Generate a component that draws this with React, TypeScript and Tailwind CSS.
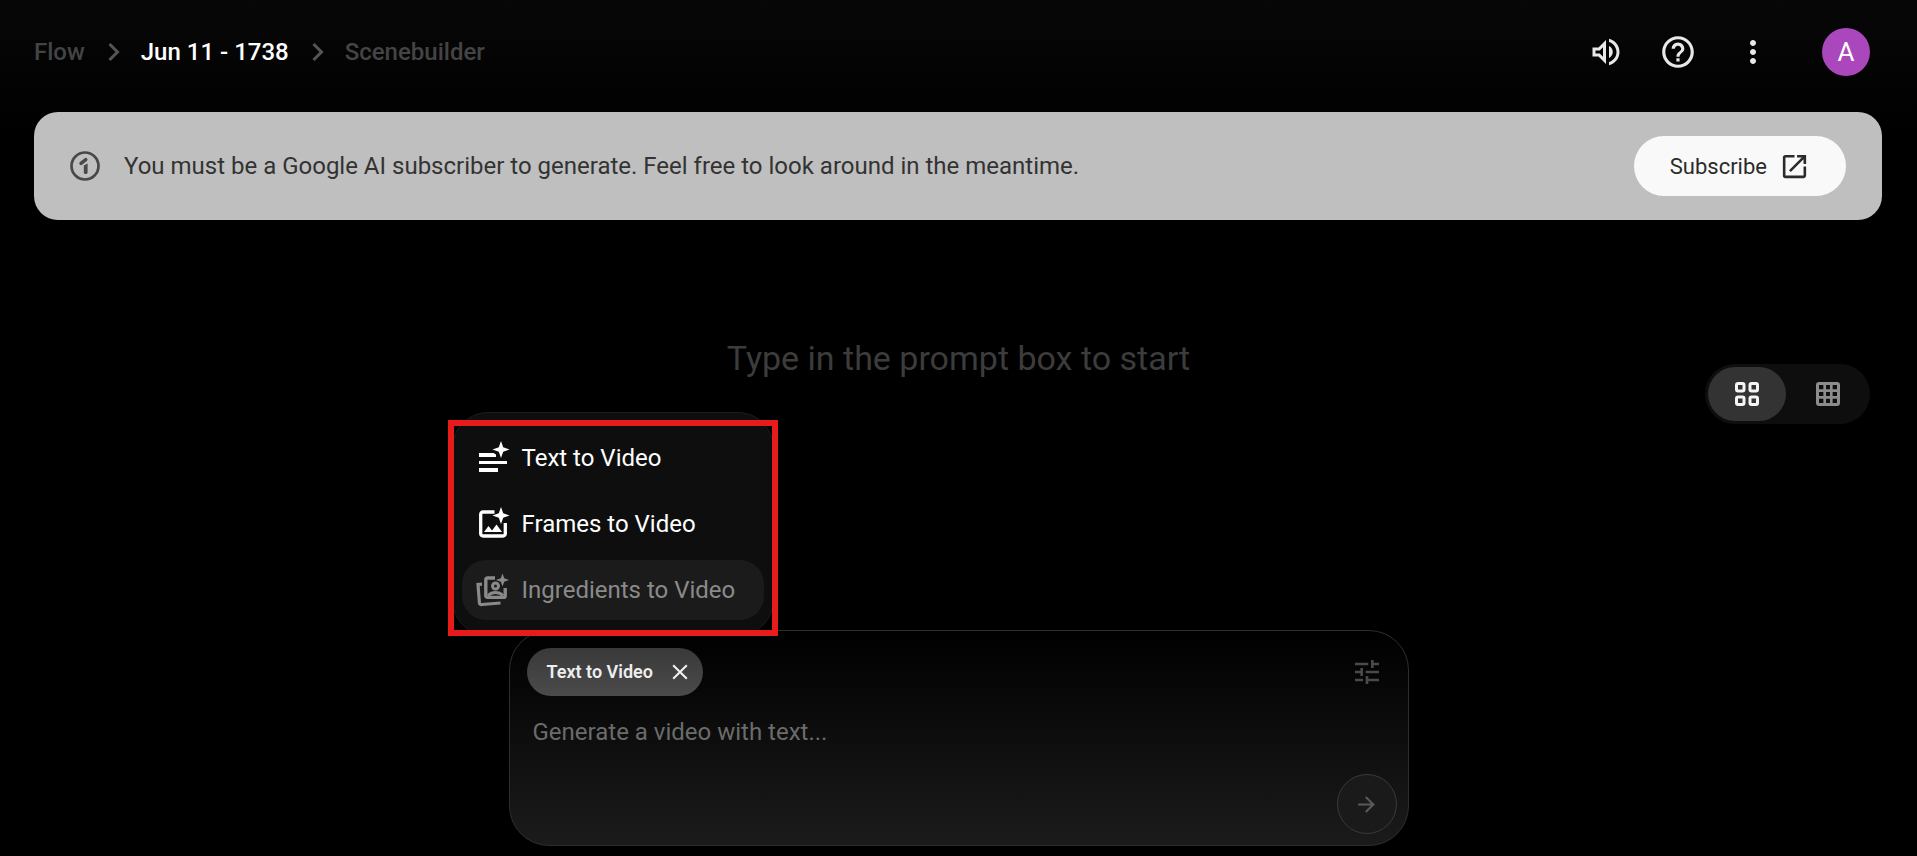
import type { ReactNode, SVGProps } from 'react';
import { useState } from 'react';
import {
  MdArrowForward,
  MdClose,
  MdHelpOutline,
  MdMoreVert,
  MdOpenInNew,
  MdOutlineVolumeUp,
  MdTune,
} from 'react-icons/md';

type IconProps = SVGProps<SVGSVGElement>;

function Icon({ children, ...props }: IconProps & { children: ReactNode }) {
  return (
    <svg viewBox="0 0 32 32" width={32} height={32} fill="currentColor" overflow="visible" aria-hidden="true" {...props}>
      {children}
    </svg>
  );
}

const SPARKLE = 'M23 -1 25.2 5.3 31.5 7.5 25.2 9.7 23 16 20.8 9.7 14.5 7.5 20.8 5.3Z';

function ChevronIcon() {
  return (
    <Icon className="mx-3 text-[#555]" fill="none" stroke="currentColor" strokeWidth={3}>
      <path d="m12.5 8 8 8-8 8" />
    </Icon>
  );
}

function TextSparkIcon() {
  return (
    <Icon>
      <path d={SPARKLE} />
      <path d="M1 11h14.5l2.5 1.5V15H1zM1 19h28v3H1zM1 26h19v4H1z" />
    </Icon>
  );
}

function ImageSparkIcon() {
  return (
    <Icon>
      <path d={SPARKLE} />
      <path
        d="M16.5 4H5a2.3 2.3 0 0 0-2.3 2.3v19.4A2.3 2.3 0 0 0 5 28h20a2.3 2.3 0 0 0 2.3-2.3V15"
        fill="none"
        stroke="currentColor"
        strokeWidth={3.3}
      />
      <path d="M6 24l4.5-6 3.5 4.5 4.5-6L24 24z" />
    </Icon>
  );
}

function PortraitSparkIcon() {
  return (
    <Icon>
      <path d="M24.5 -0.5 26.2 4.3 31 6 26.2 7.7 24.5 12.5 22.8 7.7 18 6 22.8 4.3Z" />
      <path
        d="M17 4H9.5A1.7 1.7 0 0 0 7.800 5.7v16A1.7 1.7 0 0 0 9.5 23.4h16a1.7 1.7 0 0 0 1.7-1.7V14"
        fill="none"
        stroke="currentColor"
        strokeWidth={3.4}
      />
      <circle cx="17.5" cy="12" r="3" fill="none" stroke="currentColor" strokeWidth={3} />
      <path d="M10 21.500c4-4 11-4 15 0" fill="none" stroke="currentColor" strokeWidth={3} />
      <path
        d="M4 10.2 0 10.5 1.4 28.5A2 2 0 0 0 4 30.5L22.5 29"
        fill="none"
        stroke="currentColor"
        strokeWidth={3.200}
      />
    </Icon>
  );
}

function OneIcon() {
  return (
    <Icon className="shrink-0 text-[#484848]" fill="none" stroke="currentColor">
      <circle cx="16" cy="16" r="13.5" strokeWidth={2.7} />
      <path d="M14.8 15.5 18.6 13.500V22.200a1.900 1.900 0 0 1-3.800 0z" fill="currentColor" stroke="none" />
      <path d="M12 13.4 16.8 9.6" strokeWidth={3.4} strokeLinecap="round" />
    </Icon>
  );
}

function TilesIcon() {
  return (
    <svg viewBox="0 0 24 24" width={24} height={24} fill="none" stroke="currentColor" strokeWidth={3} aria-hidden="true">
      <rect x="1.5" y="1.5" width="7.5" height="7.5" rx="1.5" />
      <rect x="15" y="1.5" width="7.5" height="7.5" rx="1.5" />
      <rect x="1.5" y="15" width="7.5" height="7.5" rx="1.5" />
      <rect x="15" y="15" width="7.5" height="7.5" rx="1.5" />
    </svg>
  );
}

function GridIcon() {
  return (
    <svg viewBox="0 0 24 24" width={24} height={24} fill="none" stroke="currentColor" aria-hidden="true">
      <rect x="1.5" y="1.5" width="21" height="21" rx="1.5" strokeWidth={3} />
      <path d="M8.7 2v20M15.3 2v20M2 8.7h20M2 15.3h20" strokeWidth={2.7} />
    </svg>
  );
}

const MODES = [
  { label: 'Text to Video', icon: TextSparkIcon },
  { label: 'Frames to Video', icon: ImageSparkIcon },
  { label: 'Ingredients to Video', icon: PortraitSparkIcon, disabled: true },
];

function Header() {
  return (
    <header className="flex h-28 items-center justify-between pr-[47px] pb-2 pl-[34px]">
      <nav aria-label="Breadcrumb" className="flex items-center text-2xl font-medium text-[#444]">
        <a href="#flow">Flow</a>
        <ChevronIcon />
        <a href="#project" className="text-white">
          Jun 11 - 1738
        </a>
        <ChevronIcon />
        <span>Scenebuilder</span>
      </nav>
      <div className="flex items-center text-[#e8e8e8]">
        <button type="button" aria-label="Sound" className="mr-[35px]">
          <MdOutlineVolumeUp size={36} />
        </button>
        <button type="button" aria-label="Help" className="mr-[38px]">
          <MdHelpOutline size={38} />
        </button>
        <button type="button" aria-label="More" className="mr-[51px]">
          <MdMoreVert size={36} />
        </button>
        <button
          type="button"
          aria-label="Account"
          className="size-12 rounded-full bg-[#ab47bc] text-[26px] leading-12 text-white"
        >
          A
        </button>
      </div>
    </header>
  );
}

function Banner() {
  return (
    <section className="mr-[35px] ml-[34px] flex items-center rounded-3xl bg-[#bfbfbf] py-6 pr-9 pl-[35px] text-[#333]">
      <OneIcon />
      <p className="ml-[23px] flex-1 text-2xl">
        You must be a Google AI subscriber to generate. Feel free to look around in the meantime.
      </p>
      <a
        href="#subscribe"
        className="flex h-15 items-center gap-3 rounded-full bg-[#f9f9f9] px-9 text-[22px] text-[#2b2b2b]"
      >
        Subscribe
        <MdOpenInNew size={31} />
      </a>
    </section>
  );
}

function ViewToggle() {
  const [view, setView] = useState('tiles');
  const views = [
    { id: 'tiles', label: 'Large tiles', icon: TilesIcon },
    { id: 'grid', label: 'Small grid', icon: GridIcon },
  ];

  return (
    <div className="flex h-15 items-center gap-[3px] rounded-full bg-[#0e0e0e] p-[3px]">
      {views.map(({ id, label, icon: ViewIcon }) => (
        <button
          key={id}
          type="button"
          aria-label={label}
          aria-pressed={view === id}
          onClick={() => setView(id)}
          className={`flex h-full w-[78px] items-center justify-center rounded-full ${
            view === id ? 'bg-[#333] text-[#f5f5f5]' : 'text-[#8c8c8c]'
          }`}
        >
          <ViewIcon />
        </button>
      ))}
    </div>
  );
}

function ModeMenu() {
  return (
    <div className="absolute -top-[219px] -left-[58px] z-10 w-[322px]">
      <div
        role="menu"
        className="flex flex-col gap-1.5 rounded-[36px] border border-[#1e1e1e] bg-[#0e0e0e] px-[9px] py-[15px]"
      >
        {MODES.map(({ label, icon: ModeIcon, disabled }) => (
          <button
            key={label}
            type="button"
            role="menuitem"
            disabled={disabled}
            className={`flex h-15 items-center gap-3 rounded-3xl px-4 text-2xl whitespace-nowrap ${
              disabled ? 'bg-[#1b1b1b] text-[#8a8a8a]' : 'text-white'
            }`}
          >
            <ModeIcon />
            {label}
          </button>
        ))}
      </div>
      <div className="pointer-events-none absolute -inset-x-1 top-2 bottom-0 border-6 border-[#e81b1b]" />
    </div>
  );
}

function PromptBox() {
  return (
    <form
      onSubmit={(e) => e.preventDefault()}
      className="relative mx-auto flex h-[216px] w-full max-w-[900px] gap-4 rounded-[40px] border border-[#2e2e2e] bg-linear-to-b/srgb from-black to-[#1b1b1b] pt-[17px] pr-[11px] pb-[11px] pl-[17px]"
    >
      <ModeMenu />
      <div className="flex flex-1 flex-col items-start gap-4">
        <button
          type="button"
          className="flex h-12 items-center gap-3.5 rounded-full bg-linear-to-b/srgb from-[#393939] to-[#4b4b4b] pr-2.5 pl-5 text-lg font-semibold text-[#eee]"
        >
          Text to Video
          <MdClose size={26} />
        </button>
        <textarea
          aria-label="Prompt"
          placeholder="Generate a video with text..."
          className="w-full flex-1 resize-none bg-transparent px-1.5 text-2xl leading-10 text-white outline-none placeholder:text-[#6b6b6b]"
        />
      </div>
      <div className="flex flex-col items-center justify-between">
        <button type="button" aria-label="Settings" className="flex h-12 items-center text-[#4a4a4a]">
          <MdTune size={32} />
        </button>
        <button
          type="submit"
          aria-label="Generate"
          className="flex size-15 items-center justify-center rounded-full border border-[#3a3a3a] bg-[#1a1a1a] text-[#5a5a5a]"
        >
          <MdArrowForward size={25} />
        </button>
      </div>
    </form>
  );
}

export default function App() {
  return (
    <div className="flex min-h-screen flex-col bg-black bg-linear-to-b/srgb from-[#070707] to-black to-[140px] font-['Roboto',sans-serif]">
      <Header />
      <Banner />
      <main className="flex flex-1 flex-col justify-between pb-2.5">
        <div className="grid grid-cols-[1fr_auto_1fr] items-start px-[47px]">
          <h1 className="col-start-2 mt-28 text-[34px] leading-13 text-[#3c3c3c]">Type in the prompt box to start</h1>
          <div className="mt-36 justify-self-end">
            <ViewToggle />
          </div>
        </div>
        <PromptBox />
      </main>
    </div>
  );
}
